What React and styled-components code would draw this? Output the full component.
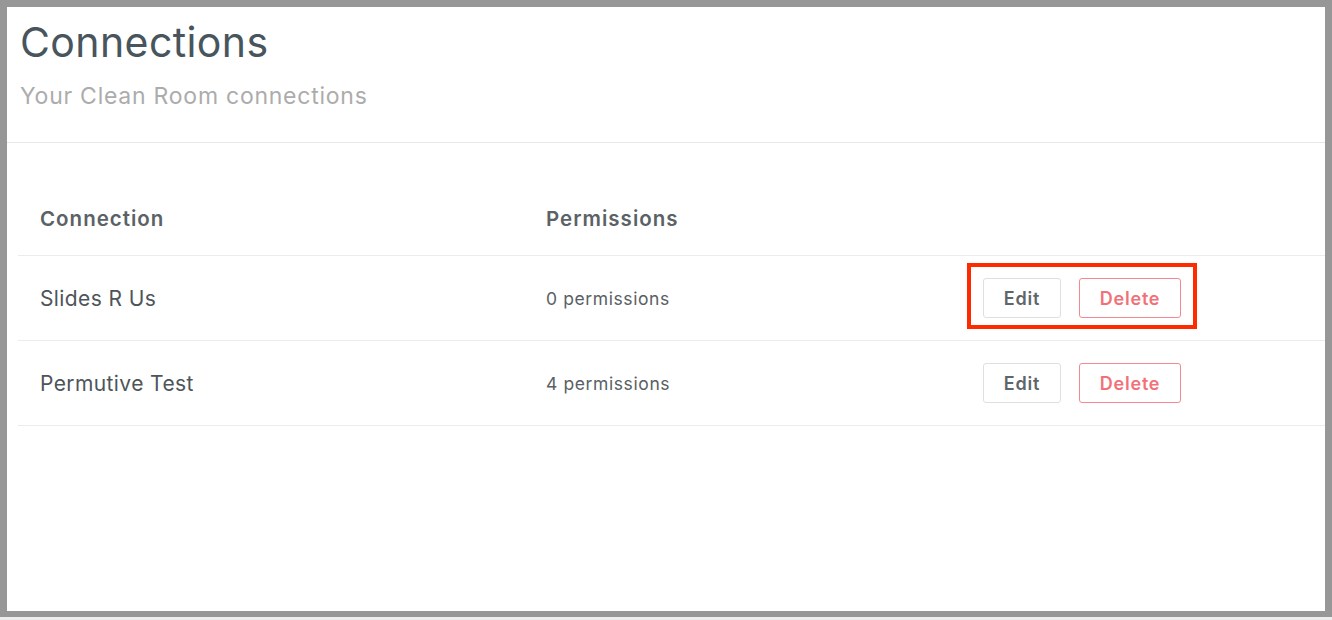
import styled, { createGlobalStyle } from "styled-components";

const GlobalStyle = createGlobalStyle`
  html, body {
    margin: 0;
    padding: 0;
    background: #ededed;
  }
  body {
    font-family: "Inter", "Open Sans", "Liberation Sans", sans-serif;
  }
`;

// Outer grey frame round the whole screen
const Frame = styled.div`
  box-sizing: border-box;
  width: 1332px;
  height: 617px;
  border: 7px solid #979797;
  border-bottom-width: 6px;
  background: #ffffff;
`;

const PageHeader = styled.header`
  padding: 11px 0 0 13px;
  height: 136px;
  box-sizing: border-box;
  border-bottom: 1px solid #e8e8e8;
`;

const Title = styled.h1`
  margin: 0;
  font-size: 41px;
  font-weight: 400;
  line-height: 48px;
  color: #48555c;
  letter-spacing: 0.4px;
`;

const Subtitle = styled.p`
  margin: 16px 0 0;
  font-size: 23px;
  line-height: 28px;
  letter-spacing: 0.75px;
  color: #acacac;
`;

const Table = styled.div`
  margin: 41px 0 0 11px;
`;

const Row = styled.div`
  display: grid;
  grid-template-columns: 506px 437px 1fr;
  align-items: center;
  height: ${(p) => (p.$head ? "72px" : "85px")};
  padding-left: 22px;
  border-bottom: 1px solid #ececec;
  box-sizing: border-box;
`;

const HeadCell = styled.div`
  font-size: 20.5px;
  font-weight: 600;
  letter-spacing: 1px;
  color: #5b6266;
  padding-bottom: 2px;
`;

const NameCell = styled.div`
  font-size: 21px;
  letter-spacing: 0.4px;
  color: #4d555a;
`;

const PermCell = styled.div`
  font-size: 17.5px;
  letter-spacing: 0.6px;
  color: #596064;
`;

const Actions = styled.div`
  position: relative;
  display: flex;
  gap: 18px;
  width: max-content;

  ${(p) =>
    p.$highlight &&
    `
    &::after {
      content: "";
      position: absolute;
      top: -15px;
      left: -16px;
      right: -16px;
      bottom: -11px;
      border: 4px solid #ff2a00;
      pointer-events: none;
    }
  `}
`;

const Button = styled.button`
  box-sizing: border-box;
  height: 40px;
  width: ${(p) => (p.$danger ? "102px" : "78px")};
  border-radius: 3px;
  background: #ffffff;
  border: 1px solid ${(p) => (p.$danger ? "#f08a90" : "#dedfdf")};
  color: ${(p) => (p.$danger ? "#f27179" : "#5f6669")};
  font-family: inherit;
  font-size: 18px;
  font-weight: 600;
  letter-spacing: 0.8px;
  padding: 0;
  cursor: pointer;
`;

const connections = [
  { name: "Slides R Us", permissions: 0, highlight: true },
  { name: "Permutive Test", permissions: 4 },
];

export default function App() {
  return (
    <>
      <GlobalStyle />
      <Frame>
        <PageHeader>
          <Title>Connections</Title>
          <Subtitle>Your Clean Room connections</Subtitle>
        </PageHeader>
        <Table>
          <Row $head>
            <HeadCell>Connection</HeadCell>
            <HeadCell>Permissions</HeadCell>
            <div />
          </Row>
          {connections.map((c) => (
            <Row key={c.name}>
              <NameCell>{c.name}</NameCell>
              <PermCell>{c.permissions} permissions</PermCell>
              <Actions $highlight={c.highlight}>
                <Button>Edit</Button>
                <Button $danger>Delete</Button>
              </Actions>
            </Row>
          ))}
        </Table>
      </Frame>
    </>
  );
}
